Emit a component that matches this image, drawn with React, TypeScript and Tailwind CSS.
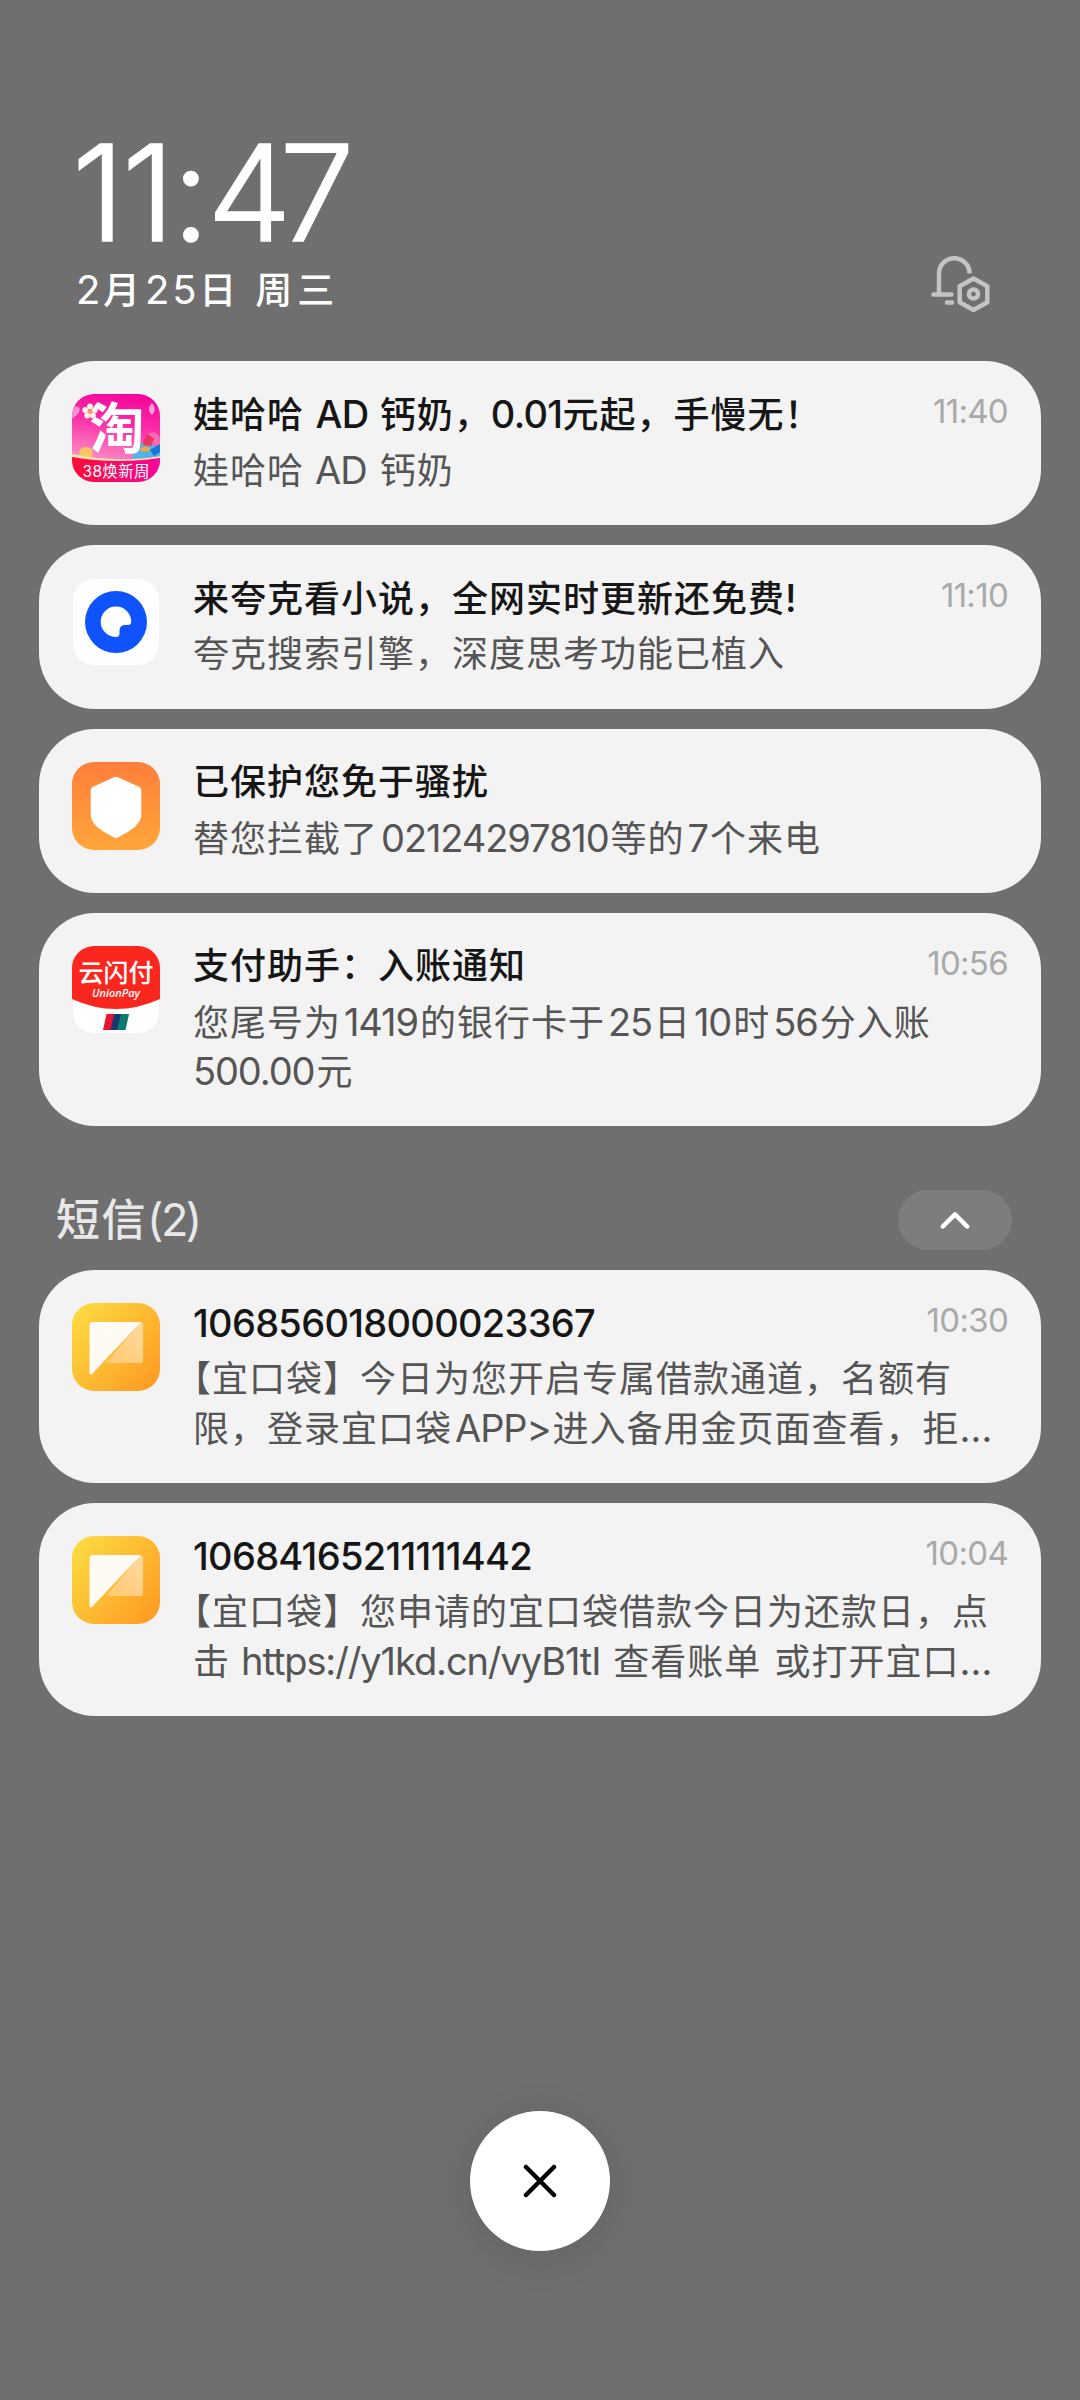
import type { ReactNode } from "react";

type Notification = {
  icon: ReactNode;
  title: string;
  lines: string[];
  time?: string;
};

type MixedProps = {
  text: string;
  latin: string;
  spaced?: boolean;
};

// Latin letters and digits are set slightly larger than the Chinese glyphs
const Mixed = ({ text, latin, spaced }: MixedProps) => {
  const parts = text.split(/([\x20-\x7e…]+)/);

  return (
    <>
      {parts.map((part, i) => {
        if (i % 2 === 0) return part;
        const gap = spaced && parts[i - 1] !== "" && !/^[ …]/.test(part);
        return (
          <span key={i} className={gap ? `${latin} ml-[3px]` : latin}>
            {part}
          </span>
        );
      })}
    </>
  );
};

const TaobaoIcon = () => (
  <svg viewBox="0 0 88 88" className="size-[88px]">
    <defs>
      <clipPath id="tb-clip">
        <rect width="88" height="88" rx="22" />
      </clipPath>
      <linearGradient id="tb-bg" x1="0.6" y1="0" x2="0.4" y2="1">
        <stop offset="0" stopColor="#f5069a" />
        <stop offset="0.35" stopColor="#fb2fa8" />
        <stop offset="0.8" stopColor="#fb8fc6" />
      </linearGradient>
      <linearGradient id="tb-bar" x1="0" y1="0" x2="1" y2="0">
        <stop offset="0" stopColor="#fb0d36" />
        <stop offset="1" stopColor="#f5079c" />
      </linearGradient>
    </defs>
    <g clipPath="url(#tb-clip)">
      <rect width="88" height="88" fill="url(#tb-bg)" />
      <path d="M0 14c6-4 9 0 7 4S0 24 0 24z" fill="#fb8fd0" />
      <path d="M80 9c4 4 3 9 0 12c-4-4-4-8 0-12z" fill="#fba3d6" />
      <path d="M76 40c6-4 9 0 12 4v8c-6 0-11-3-12-12z" fill="#f96cb4" />
      <path d="M60 63c3-8 8-14 14-16l14 8v14H58z" fill="#4fb4ea" />
      <path d="M78 56l10-6v8l-6 4z" fill="#1c74d6" />
      <path d="M72 46l4-6 6 5-3 7-8-1z" fill="#f0325f" />
      <ellipse cx="73" cy="55" rx="5" ry="2.500" fill="#f7a23b" />
      <ellipse cx="14" cy="59" rx="7" ry="6" fill="#f9c765" />
      <path d="M0 62c28 5 60 6 88 0v26H0z" fill="url(#tb-bar)" />
      <path d="M0 60c28 6 60 7 88 2v2c-28 4-60 4-88-1z" fill="#fde7b0" />
      <text
        x="45"
        y="54"
        textAnchor="middle"
        fontSize="55"
        fontWeight="700"
        fill="#fff"
        fontFamily="Noto Sans CJK SC, sans-serif"
      >
        淘
      </text>
      <g fill="#fff3ee">
        <circle cx="18" cy="12.500" r="2.900" />
        <circle cx="22.800" cy="16" r="2.900" />
        <circle cx="21" cy="21.500" r="2.900" />
        <circle cx="15.200" cy="21.500" r="2.900" />
        <circle cx="13.300" cy="16" r="2.900" />
      </g>
      <circle cx="18" cy="17.500" r="2.200" fill="#f6a44c" />
      <text
        x="44"
        y="82.500"
        textAnchor="middle"
        fontSize="15.500"
        fill="#fff"
        textLength="67"
        fontFamily="Inter, Noto Sans CJK SC, sans-serif"
      >
        38焕新周
      </text>
    </g>
  </svg>
);

const QuarkIcon = () => (
  <svg viewBox="0 0 88 88" className="size-[88px]">
    <rect x="1" y="1" width="86" height="86" rx="21" fill="#fff" />
    <circle cx="44" cy="44" r="31" fill="#0f53ff" />
    <path
      d="M44 28.500a15.200 15.200 0 0 1 15.200 15.200c0 2.300-1 3.300-3.200 3.300h-2.500c-4 0-6 2-6 6v2.500c0 2.400-1.200 3.600-3.500 3.600a15.300 15.300 0 0 1 0-30.600z"
      fill="#fff"
    />
  </svg>
);

const ShieldIcon = () => (
  <svg viewBox="0 0 88 88" className="size-[88px]">
    <defs>
      <linearGradient id="shield-bg" x1="0" y1="0" x2="0" y2="1">
        <stop offset="0" stopColor="#ff7e3a" />
        <stop offset="1" stopColor="#ffa63a" />
      </linearGradient>
    </defs>
    <rect width="88" height="88" rx="22" fill="url(#shield-bg)" />
    <path
      d="M42 15.300q2-1 4 0L67.500 25Q69.300 26 69.300 28V52C69.300 63 58 69 46 75.500q-2 1-4 0C30 69 18.700 63 18.700 52V28q0-2 1.800-3z"
      fill="#fff"
    />
  </svg>
);

const UnionPayIcon = () => (
  <svg viewBox="0 0 88 88" className="size-[88px]">
    <defs>
      <clipPath id="up-clip">
        <rect width="88" height="88" rx="22" />
      </clipPath>
    </defs>
    <g clipPath="url(#up-clip)">
      <rect x="1" width="86" height="87" rx="21" fill="#fff" />
      <path d="M0 0h88v53Q66 63 44 63T0 53z" fill="#fb261d" />
      <text
        x="44"
        y="36"
        textAnchor="middle"
        fontSize="25"
        fontWeight="500"
        fill="#fff"
        textLength="75"
        fontFamily="Noto Sans CJK SC, sans-serif"
      >
        云闪付
      </text>
      <text
        x="44"
        y="51"
        textAnchor="middle"
        fontSize="11"
        fontStyle="italic"
        fontWeight="600"
        fill="#fff"
        textLength="48"
        lengthAdjust="spacingAndGlyphs"
        fontFamily="Open Sans, sans-serif"
      >
        UnionPay
      </text>
      <path d="M34.500 68h8l-3.500 16h-8z" fill="#e8132d" />
      <path d="M42 68h7.500l-3.500 16h-7.500z" fill="#16386f" />
      <path d="M49 68h8l-3.500 16h-8.500z" fill="#0d7a70" />
    </g>
  </svg>
);

const MessageIcon = ({ id }: { id: string }) => (
  <svg viewBox="0 0 88 88" className="size-[88px]">
    <defs>
      <linearGradient id={id} x1="0" y1="0.1" x2="1" y2="0.9">
        <stop offset="0" stopColor="#fbdc42" />
        <stop offset="1" stopColor="#ff9a22" />
      </linearGradient>
      <linearGradient id={`${id}-fold`} x1="1" y1="0" x2="0.3" y2="1">
        <stop offset="0" stopColor="#ffd9a0" />
        <stop offset="1" stopColor="#ffcb78" />
      </linearGradient>
    </defs>
    <rect width="88" height="88" rx="22" fill={`url(#${id})`} />
    <path
      d="M68 19.500q3 0 3 3V57q0 3-3 3H34z"
      fill={`url(#${id}-fold)`}
    />
    <path
      d="M21 19h48L20 71q-2.500 1.500-2.500-1.500V22.500Q17.500 19 21 19z"
      fill="#fffaf3"
    />
  </svg>
);

const BellSettingsIcon = () => (
  <svg
    viewBox="0 0 60 56"
    className="h-[56px] w-[60px]"
    fill="none"
    stroke="#c4c4c4"
    strokeWidth="4.500"
  >
    <path d="M8 38V17.500a15.200 15.200 0 0 1 30.600 0" />
    <path d="M2.500 38.500H20.500M16 46.500h5" strokeLinecap="round" />
    <path
      d="M42.500 22.500l13.800 7.800v16L42.500 54l-13.800-7.700v-16z"
      strokeLinejoin="round"
    />
    <circle cx="42.500" cy="38" r="4.600" />
  </svg>
);

const notifications: Notification[] = [
  {
    icon: <TaobaoIcon />,
    title: "娃哈哈 AD 钙奶，0.01元起，手慢无！",
    lines: ["娃哈哈 AD 钙奶"],
    time: "11:40",
  },
  {
    icon: <QuarkIcon />,
    title: "来夸克看小说，全网实时更新还免费!",
    lines: ["夸克搜索引擎，深度思考功能已植入"],
    time: "11:10",
  },
  {
    icon: <ShieldIcon />,
    title: "已保护您免于骚扰",
    lines: ["替您拦截了02124297810等的7个来电"],
  },
  {
    icon: <UnionPayIcon />,
    title: "支付助手：入账通知",
    lines: ["您尾号为1419的银行卡于25日10时56分入账", "500.00元"],
    time: "10:56",
  },
];

const messages: Notification[] = [
  {
    icon: <MessageIcon id="msg-1" />,
    title: "106856018000023367",
    lines: [
      "【宜口袋】今日为您开启专属借款通道，名额有",
      "限，登录宜口袋APP>进入备用金页面查看，拒…",
    ],
    time: "10:30",
  },
  {
    icon: <MessageIcon id="msg-2" />,
    title: "10684165211111442",
    lines: [
      "【宜口袋】您申请的宜口袋借款今日为还款日，点",
      "击 https://y1kd.cn/vyB1tI 查看账单 或打开宜口…",
    ],
    time: "10:04",
  },
];

const Card = ({ icon, title, lines, time }: Notification) => (
  <div className="flex rounded-[56px] bg-[#f3f3f3] pt-[29px] pr-[33px] pb-[30px] pl-[33px]">
    <div className="mt-1 shrink-0">{icon}</div>
    <div className="ml-[33px] min-w-0 flex-1">
      <div className="flex justify-between">
        <div className="h-[49px] text-[36px] leading-[49px] font-medium tracking-[1px] whitespace-pre text-[#161616]">
          <Mixed
            text={title}
            latin="text-[38px] tracking-[-0.7px] [word-spacing:2px]"
          />
        </div>
        {time && (
          <div className="text-[33px] leading-[43px] tracking-[-0.7px] text-[#a9a9a9]">
            {time}
          </div>
        )}
      </div>
      <div className="mt-[7px] text-[36px] leading-[49px] tracking-[1px] text-[#555]">
        {lines.map((line) => (
          <div
            key={line}
            className={
              line.startsWith("【")
                ? "-ml-[18px] h-[49px] whitespace-pre"
                : "h-[49px] whitespace-pre"
            }
          >
            <Mixed
              text={line}
              latin="mr-[2px] text-[38px] tracking-[-1.1px] [word-spacing:1.5px]"
              spaced
            />
          </div>
        ))}
      </div>
    </div>
  </div>
);

const App = () => {
  return (
    <div className="flex h-[2400px] w-[1080px] flex-col bg-[#6f6f6f] px-[39px] font-['Inter','Noto_Sans_CJK_SC',sans-serif]">
      {/* Clock and date */}
      <header className="flex h-[361px] items-start justify-between pr-[50px] pl-[36px] text-white">
        <div className="pt-[108px]">
          <div className="-ml-[3px] h-[158px] text-[134px] leading-[168px] font-light tracking-[-2.7px] [-webkit-text-stroke:1.6px_white]">
            11:<span className="tracking-[-12px]">47</span>
          </div>
          <div className="ml-px h-[48px] text-[37px] leading-[48px] font-medium tracking-[5px] whitespace-pre">
            <Mixed
              text="2月25日 周三"
              latin="text-[40px] font-normal tracking-[2.7px]"
            />
          </div>
        </div>
        <div className="pt-[256px]">
          <BellSettingsIcon />
        </div>
      </header>

      <div className="flex flex-col gap-5">
        {notifications.map((item) => (
          <Card key={item.title} {...item} />
        ))}
      </div>

      {/* Message group */}
      <div className="flex h-[144px] items-start justify-between pt-[64px] pr-[29px] pl-[17px]">
        <div className="text-[44px] leading-[60px] font-medium tracking-[1.500px] text-[#e8e8e8]">
          <Mixed
            text="短信(2)"
            latin="text-[45px] font-normal tracking-[-2.500px]"
          />
        </div>
        <button className="flex h-[60px] w-[114px] items-center justify-center rounded-full bg-[#7d7d7d]">
          <svg
            viewBox="0 0 30 18"
            className="h-[18px] w-[30px]"
            fill="none"
            stroke="#fff"
            strokeWidth="4.500"
            strokeLinecap="round"
            strokeLinejoin="round"
          >
            <path d="M2.800 15.500L15 3.300l12.200 12.200" />
          </svg>
        </button>
      </div>

      <div className="flex flex-col gap-5">
        {messages.map((item) => (
          <Card key={item.title} {...item} />
        ))}
      </div>

      {/* Clear all */}
      <button className="mt-auto mb-[149px] flex size-[140px] items-center justify-center self-center rounded-full bg-white shadow-[0_6px_40px_rgba(0,0,0,0.12)]">
        <svg
          viewBox="0 0 34 34"
          className="size-[34px]"
          stroke="#000"
          strokeWidth="4.500"
          strokeLinecap="round"
        >
          <path d="M3 3l28 28M31 3L3 31" />
        </svg>
      </button>
    </div>
  );
};

export default App;
